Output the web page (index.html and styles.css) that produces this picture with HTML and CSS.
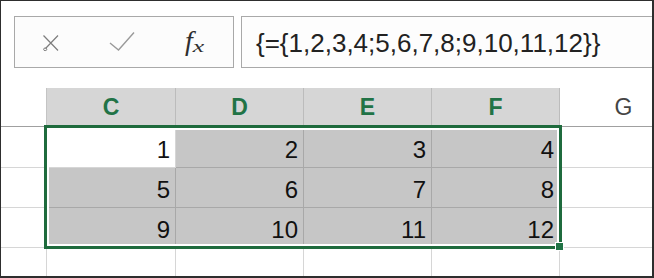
FILE: index.html
```html
<!DOCTYPE html>
<html>
<head>
<meta charset="utf-8">
<link rel="stylesheet" href="styles.css">
</head>
<body>
<div class="frame">
  <div class="formula-bar">
    <div class="fb-buttons">
      <span class="btn btn-cancel">
        <svg width="18" height="18" viewBox="0 0 18 18">
          <path d="M1.5 1.5 L16 16.5 M16 1.5 L3.5 14.5" fill="none" stroke="#7d7d7d" stroke-width="1.2"/>
          <ellipse cx="3.2" cy="15.3" rx="1.6" ry="1.3" fill="none" stroke="#7d7d7d" stroke-width="1"/>
        </svg>
      </span>
      <span class="btn btn-enter">
        <svg width="26" height="20" viewBox="0 0 26 20">
          <polyline points="1,12 9.5,19 25,1.5" fill="none" stroke="#9a9a9a" stroke-width="1.4"/>
        </svg>
      </span>
      <span class="btn btn-fx"><span class="fx-f">f</span><span class="fx-x">x</span></span>
    </div>
    <div class="fb-input">{={1,2,3,4;5,6,7,8;9,10,11,12}}</div>
  </div>

  <div class="sheet">
    <div class="hdr"></div>
    <div class="hdr hdr-sel">C</div>
    <div class="hdr hdr-sel">D</div>
    <div class="hdr hdr-sel">E</div>
    <div class="hdr hdr-sel">F</div>
    <div class="hdr">G</div>

    <div class="cell"></div>
    <div class="cell active">1</div>
    <div class="cell sel">2</div>
    <div class="cell sel">3</div>
    <div class="cell sel">4</div>
    <div class="cell"></div>

    <div class="cell"></div>
    <div class="cell sel">5</div>
    <div class="cell sel">6</div>
    <div class="cell sel">7</div>
    <div class="cell sel">8</div>
    <div class="cell"></div>

    <div class="cell"></div>
    <div class="cell sel">9</div>
    <div class="cell sel">10</div>
    <div class="cell sel">11</div>
    <div class="cell sel">12</div>
    <div class="cell"></div>

    <div class="cell"></div>
    <div class="cell"></div>
    <div class="cell"></div>
    <div class="cell"></div>
    <div class="cell"></div>
    <div class="cell"></div>

    <div class="selection"><span class="handle"></span></div>
  </div>
</div>
</body>
</html>
```

FILE: styles.css
```css
* { box-sizing: border-box; }

html, body {
  margin: 0;
  padding: 0;
  background: #ffffff;
}

.frame {
  width: 654px;
  height: 278px;
  border-top: 1px solid #2e2e2e;
  border-left: 1px solid #2e2e2e;
  border-right: 2px solid #2e2e2e;
  border-bottom: 2px solid #2e2e2e;
  overflow: hidden;
  background: #ffffff;
  font-family: "Liberation Sans", Arial, sans-serif;
}

.formula-bar {
  display: flex;
  gap: 7px;
  margin-top: 15px;
  margin-left: 13px;
  height: 52px;
}

.fb-buttons {
  display: flex;
  width: 220px;
  flex: none;
  border: 1px solid #a9a9a9;
  background: #fcfcfc;
}

.btn {
  display: flex;
  align-items: center;
  justify-content: center;
  height: 100%;
}

.btn-cancel { width: 72px; padding-top: 1px; }
.btn-enter { width: 70px; padding-bottom: 2px; }
.btn-fx {
  width: 76px;
  align-items: baseline;
  padding-top: 10px;
  font-family: "Liberation Serif", "Times New Roman", serif;
  font-style: italic;
  color: #2e2e2e;
  line-height: 1;
}

.fx-f { font-size: 28px; }
.fx-x {
  display: inline-block;
  font-size: 16px;
  transform: scaleX(1.6);
  margin-left: 2px;
  margin-right: 3px;
  vertical-align: -2px;
  position: relative;
  top: 2px;
}

.fb-input {
  flex: 1;
  border: 1px solid #a9a9a9;
  border-right: none;
  background: #fdfdfd;
  display: flex;
  align-items: center;
  padding-left: 14px;
  padding-top: 3px;
  font-size: 26px;
  color: #222222;
  white-space: nowrap;
}

.sheet {
  margin-top: 20px;
  display: grid;
  grid-template-columns: 46px 129px 128px 128px 128px 128px;
  grid-template-rows: 39px 41px 40px 40px 40px;
  width: 687px;
  position: relative;
}

.hdr {
  display: flex;
  align-items: center;
  justify-content: center;
  border-right: 1px solid #c4c4c4;
  border-bottom: 1px solid #a0a0a0;
  font-size: 23px;
  color: #444444;
  background: #ffffff;
}

.hdr-sel {
  background: #d6d6d6;
  color: #217346;
  font-weight: bold;
  border-right-color: #bcbcbc;
}

.cell {
  display: flex;
  align-items: flex-end;
  justify-content: flex-end;
  padding-right: 5px;
  padding-bottom: 5px;
  border-right: 1px solid #d6d6d6;
  border-bottom: 1px solid #d6d6d6;
  font-size: 24px;
  line-height: 24px;
  color: #111111;
}

.cell.sel {
  background: #c6c6c6;
  border-right-color: #a8a8a8;
  border-bottom-color: #a8a8a8;
}

.cell.active {
  background: #ffffff;
}

/* selection overlay: absolutely positioned against its grid area */
.selection {
  grid-column: 2 / 6;
  grid-row: 2 / 5;
  position: absolute;
  top: -2px;
  right: -2px;
  bottom: -1px;
  left: -3px;
  border: 3px solid #1f6b3d;
  box-shadow: inset 0 0 0 2px #ffffff;
  z-index: 1;
}

.handle {
  position: absolute;
  right: -5px;
  bottom: -5px;
  width: 9px;
  height: 9px;
  background: #217346;
  border: 1px solid #ffffff;
}
```
